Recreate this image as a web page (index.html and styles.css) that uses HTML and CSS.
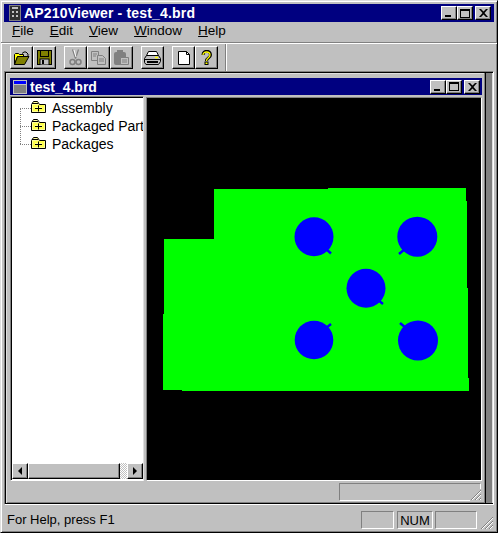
FILE: index.html
```html
<!DOCTYPE html>
<html lang="en">
<head>
<meta charset="utf-8">
<title>AP210Viewer - test_4.brd</title>
<link rel="stylesheet" href="styles.css">
</head>
<body>
<div class="app">
  <div class="titlebar">
    <svg class="appicon" width="12" height="16" viewBox="0 0 12 16"><rect width="12" height="16" fill="#808080"/><rect x="1" y="1" width="10" height="14" fill="#303030"/><rect x="3" y="2" width="6" height="2" fill="#c0c0c0"/><path d="M3 6h2v2H3zM7 6h2v2H7zM3 10h2v2H3zM7 10h2v2H7z" fill="#c0c0c0"/></svg>
    <span class="title">AP210Viewer - test_4.brd</span>
    <div class="caps">
      <span class="cap"><i class="min"></i></span><span class="cap"><i class="max"></i></span><span class="cap close"><svg width="9" height="8" viewBox="0 0 9 8"><path d="M0 0h2l2.500 2.500L7 0h2L5.500 4 9 8H7L4.500 5.500 2 8H0l3.500-4z"/></svg></span>
    </div>
  </div>
  <div class="menu">
    <span><u>F</u>ile</span><span><u>E</u>dit</span><span><u>V</u>iew</span><span><u>W</u>indow</span><span><u>H</u>elp</span>
  </div>
  <div class="toolbar">
    <div class="tools">
      <span class="tool"><svg width="16" height="14" viewBox="0 0 16 14"><path d="M0.500 13.500v-10l1-1h3l1 1h4v2h-6l-3 8z" fill="#ffff00" stroke="#000"/><path d="M0.500 13.500h10l4.500-8H3.500z" fill="#808000" stroke="#000"/><path d="M8 2.500l2-1.500h2l2 2" fill="none" stroke="#000"/><path d="M12.500 3.500h3l-1.500 1.500z" fill="#000"/></svg></span>
      <span class="tool"><svg width="15" height="15" viewBox="0 0 15 15"><rect x="0.500" y="0.500" width="14" height="14" fill="#808000" stroke="#000"/><rect x="3.500" y="0.500" width="8" height="6" fill="#808000" stroke="#000"/><rect x="3" y="9" width="9" height="6" fill="#c0c0c0" stroke="#000"/><rect x="5" y="10" width="2" height="4" fill="#000"/></svg></span>
      <span class="gap"></span>
      <span class="tool"><svg width="13" height="17" viewBox="0 0 13 17"><path d="M3.500 0.500l3 9M9.500 0.500l-3 9" stroke="#808080" fill="none" stroke-width="1.200"/><circle cx="3.500" cy="13" r="2.500" fill="none" stroke="#808080" stroke-width="1.500"/><circle cx="9.500" cy="13" r="2.500" fill="none" stroke="#808080" stroke-width="1.500"/><path d="M5 1l2 7" stroke="#fff"/></svg></span>
      <span class="tool"><svg width="15" height="14" viewBox="0 0 15 14"><path d="M0.500 0.500h7v9h-7z" fill="#c0c0c0" stroke="#808080"/><path d="M6.500 4.500h5l3 3v6h-8z" fill="#c0c0c0" stroke="#808080"/><path d="M2 3h4M2 5h3M8 8h5M8 10h5" stroke="#808080"/></svg></span>
      <span class="tool"><svg width="15" height="15" viewBox="0 0 15 15"><rect x="0" y="2" width="12" height="13" rx="2" fill="#808080"/><rect x="3" y="0" width="6" height="3" fill="#808080"/><path d="M6.500 7.500h8v7h-8z" fill="#c0c0c0" stroke="#808080"/><path d="M8 10h5M8 12h5" stroke="#808080"/></svg></span>
      <span class="gap"></span>
      <span class="tool"><svg width="17" height="14" viewBox="0 0 17 14"><path d="M4.500 0.500h8l2 4h-12z" fill="#fff" stroke="#000"/><path d="M0.500 11.500v-4l2-3h12l2 3v3l-2 3H2z" fill="#c0c0c0" stroke="#000"/><path d="M1 8.500h15" stroke="#000"/><path d="M3 11h11" stroke="#000" stroke-width="2"/><path d="M11 6.500h3" stroke="#ffff00" stroke-width="1.500"/></svg></span>
      <span class="gap"></span>
      <span class="tool"><svg width="12" height="14" viewBox="0 0 12 14"><path d="M0.500 0.500h8l3 3v10h-11z" fill="#fff" stroke="#000"/><path d="M8.500 0.500v3h3" fill="none" stroke="#000"/></svg></span>
      <span class="tool"><svg width="11" height="15" viewBox="0 0 11 15"><path d="M2 5c0-5 7.500-5 7.500 0 0 3-4 2.500-4 6" fill="none" stroke="#000" stroke-width="3"/><path d="M2 5c0-4 7-4 7 0 0 3-3.500 2.500-3.500 6" fill="none" stroke="#ffff00" stroke-width="1.300"/><rect x="3.500" y="11.500" width="4" height="3.500" fill="#000"/><rect x="4.500" y="12.500" width="2" height="1.500" fill="#ffff00"/></svg></span>
    </div>
    <div class="tooledge"></div>
  </div>
  <div class="mdi">
    <div class="child">
      <div class="childtitle">
        <svg class="docicon" width="14" height="14" viewBox="0 0 14 14"><rect width="14" height="14" fill="#c0c0c0"/><rect x="1" y="1" width="12" height="3" fill="#0000ff"/><rect x="1" y="5" width="12" height="8" fill="#808080"/></svg>
        <span class="title">test_4.brd</span>
        <div class="caps">
          <span class="cap"><i class="min"></i></span><span class="cap"><i class="max"></i></span><span class="cap close"><svg width="9" height="8" viewBox="0 0 9 8"><path d="M0 0h2l2.500 2.500L7 0h2L5.500 4 9 8H7L4.500 5.500 2 8H0l3.500-4z"/></svg></span>
        </div>
      </div>
      <div class="split">
        <div class="tree">
          <div class="rows">
            <div class="row"><i class="dots"></i><svg class="folder" width="15" height="12" viewBox="0 0 15 12"><path d="M0.500 11.500v-8l2-3h4l2 3h6v8z" fill="#ffff99" stroke="#000"/><path d="M1 2.500h6" stroke="#000"/><path d="M2 5h11M2 7h2M11 7h2M2 9h11" stroke="#ffff00"/><path d="M4 7.500h7M7.500 4.500v6" stroke="#000"/></svg><span>Assembly</span></div>
            <div class="row"><i class="dots"></i><svg class="folder" width="15" height="12" viewBox="0 0 15 12"><path d="M0.500 11.500v-8l2-3h4l2 3h6v8z" fill="#ffff99" stroke="#000"/><path d="M1 2.500h6" stroke="#000"/><path d="M2 5h11M2 7h2M11 7h2M2 9h11" stroke="#ffff00"/><path d="M4 7.500h7M7.500 4.500v6" stroke="#000"/></svg><span>Packaged Part</span></div>
            <div class="row"><i class="dots"></i><svg class="folder" width="15" height="12" viewBox="0 0 15 12"><path d="M0.500 11.500v-8l2-3h4l2 3h6v8z" fill="#ffff99" stroke="#000"/><path d="M1 2.500h6" stroke="#000"/><path d="M2 5h11M2 7h2M11 7h2M2 9h11" stroke="#ffff00"/><path d="M4 7.500h7M7.500 4.500v6" stroke="#000"/></svg><span>Packages</span></div>
          </div>
          <div class="hscroll">
            <span class="sbtn"><i class="al"></i></span>
            <span class="thumb"></span>
            <span class="track"></span>
            <span class="sbtn"><i class="ar"></i></span>
          </div>
        </div>
        <div class="canvas">
          <svg width="334" height="382" viewBox="147 98 334 382" shape-rendering="crispEdges">
            <path d="M214 189H328V188H466V201H467V288H468V378H469V391H182V390H163V314H164V239H214Z" fill="#00ff00"/>
            <g fill="#0000ff" shape-rendering="auto">
              <circle cx="314" cy="236.700" r="19.500"/>
              <circle cx="417.300" cy="236.700" r="20"/>
              <circle cx="366" cy="288.200" r="19.500"/>
              <circle cx="314" cy="340" r="19.300"/>
              <circle cx="418" cy="340.500" r="20"/>
            </g>
            <g stroke="#0000ff" stroke-width="2.500" fill="none" shape-rendering="auto">
              <path d="M326 249l5 4.500"/>
              <path d="M405 249l-6 5"/>
              <path d="M378 300l5 4"/>
              <path d="M326 328l5-4"/>
              <path d="M406 328l-6-5"/>
            </g>
          </svg>
        </div>
      </div>
      <div class="childstatus">
        <span class="pane"></span>
        <svg class="grip" width="12" height="12" viewBox="0 0 12 12"><path d="M11 1L1 11M11 5L5 11M11 9L9 11" stroke="#808080" fill="none"/><path d="M11 2L2 11M11 6L6 11M11 10L10 11" stroke="#fff" fill="none"/></svg>
      </div>
    </div>
  </div>
  <div class="status">
    <span class="msg">For Help, press F1</span>
    <span class="sp s1"></span><span class="sp s2">NUM</span><span class="sp s3"></span>
    <svg class="grip2" width="14" height="14" viewBox="0 0 14 14"><path d="M13 1L1 13M13 5L5 13M13 9L9 13" stroke="#808080" fill="none"/><path d="M13 2L2 13M13 6L6 13M13 10L10 13" stroke="#fff" fill="none"/></svg>
  </div>
</div>
</body>
</html>
```

FILE: styles.css
```css
* { box-sizing: border-box; }
html, body { margin: 0; padding: 0; background: #fff; }
body { width: 499px; height: 534px; overflow: hidden; }
.app {
  width: 498px; height: 533px;
  background: #c0c0c0;
  border: 1px solid; border-color: #dfdfdf #000 #000 #dfdfdf;
  box-shadow: inset 1px 1px 0 #fff, inset -1px -1px 0 #808080;
  padding: 3px 3px 0 3px;
  display: flex; flex-direction: column;
  font: 13px/16px "Liberation Sans", Arial, sans-serif;
  color: #000;
}
.titlebar, .childtitle {
  background: #000080; color: #fff; display: flex; align-items: center; flex: none;
  font: bold 14px/18px "Liberation Sans", Arial, sans-serif;
}
.titlebar { height: 18px; padding: 0 3px 0 5px; letter-spacing: 0.17px; }
.title { flex: 1; white-space: nowrap; margin-left: 3px; }
.appicon { flex: none; }
.caps { display: flex; flex: none; }
.cap {
  width: 16px; height: 14px; background: #c0c0c0; display: flex; align-items: center; justify-content: center;
  border: 1px solid; border-color: #fff #000 #000 #fff;
  box-shadow: inset -1px -1px 0 #808080;
}
.cap.close { margin-left: 2px; }
.cap svg { fill: #000; }
.min { width: 6px; height: 2px; background: #000; margin-top: 6px; margin-right: 2px; }
.max { width: 10px; height: 9px; border: 1px solid #000; border-top-width: 2px; }
.menu { height: 18px; display: flex; align-items: flex-start; flex: none; margin-top: 1px; font: 13.5px/16px "Liberation Sans", Arial, sans-serif; padding-left: 8px; gap: 16px; }
.toolbar { flex: none; height: 29px; border-top: 1px solid #808080; box-shadow: inset 0 1px 0 #fff; margin: 1px -3px 0 -3px; padding: 3px 0 0 9px; position: relative; }
.tools { display: flex; }
.tool { width: 23px; height: 23px; display: flex; align-items: center; justify-content: center; border: 1px solid; border-color: #fff #000 #000 #fff; box-shadow: inset -1px -1px 0 #808080; background: #c0c0c0; }
.gap { width: 8px; }
.tooledge { position: absolute; left: 224px; top: 1px; bottom: 0; width: 2px; border-left: 1px solid #808080; border-right: 1px solid #fff; }
.mdi { flex: 1; min-height: 0; border: 1px solid; border-color: #808080 #fff #fff #808080; box-shadow: inset 1px 1px 0 #000, inset 0 -1px 0 #000, inset -1px 0 0 #dfdfdf; padding: 1px 7px 1px 1px; background: #808080; display: flex; }
.child { flex: 1; min-width: 0; background: #c0c0c0; padding: 5px 4px 0 4px; box-shadow: inset -1px 0 0 #000, inset -2px 0 0 #808080, inset 1px 1px 0 #dfdfdf, inset 0 -1px 0 #808080; display: flex; flex-direction: column; }
.childtitle { height: 17px; margin-bottom: 1px; padding: 0 2px 0 3px; }
.docicon { flex: none; }
.split { flex: 1; min-height: 0; display: flex; }
.tree { width: 134px; flex: none; background: #fff; border: 1px solid; border-color: #808080 #dfdfdf #fff #808080; box-shadow: inset 1px 1px 0 #000; display: flex; flex-direction: column; }
.rows { flex: 1; min-height: 0; padding: 2px 0 0 9px; font: 14px/18px "Liberation Sans", Arial, sans-serif; overflow: hidden; }
.row { height: 18px; display: flex; align-items: center; white-space: nowrap; position: relative; }
.dots { width: 11px; border-top: 1px dotted #808080; flex: none; }
.row + .row::before { content: ""; position: absolute; left: 0; top: -9px; height: 18px; border-left: 1px dotted #808080; }
.folder { flex: none; margin-right: 6px; margin-top: -2px; }
.hscroll { flex: none; height: 16px; display: flex; margin: 0 0 1px 1px; background: #c0c0c0; }
.sbtn { width: 16px; height: 16px; display: flex; align-items: center; justify-content: center; border: 1px solid; border-color: #fff #000 #000 #fff; box-shadow: inset -1px -1px 0 #808080; background: #c0c0c0; flex: none; }
.al { border: 4px solid transparent; border-left: 0; border-right-color: #000; }
.ar { border: 4px solid transparent; border-right: 0; border-left-color: #000; }
.thumb { flex: 1; border: 1px solid; border-color: #fff #000 #000 #fff; box-shadow: inset -1px -1px 0 #808080; }
.track { width: 7px; flex: none; background: repeating-conic-gradient(#c0c0c0 0 25%, #fff 0 50%) 0 0 / 2px 2px; }
.canvas { flex: 1; min-width: 0; margin: 1px 0 0 2px; background: #000; line-height: 0; border: 1px solid; border-color: #808080 #fff #fff #808080; overflow: hidden; }
.childstatus { flex: none; height: 22px; display: flex; justify-content: flex-end; align-items: flex-start; position: relative; padding: 2px 1px 0 0; }
.pane { width: 142px; height: 18px; border: 1px solid; border-color: #808080 #fff #fff #808080; }
.grip { position: absolute; right: 0; bottom: 2px; background: #c0c0c0; }
.status { flex: none; height: 27px; display: flex; align-items: flex-start; position: relative; padding: 6px 0 0 3px; }
.msg { flex: 1; margin-top: 1px; }
.sp { height: 18px; border: 1px solid; border-color: #808080 #fff #fff #808080; text-align: center; line-height: 17px; display: block; }
.s1 { width: 33px; }
.s2 { width: 36px; margin-left: 3px; }
.s3 { width: 42px; margin-left: 2px; margin-right: 17px; }
.grip2 { position: absolute; right: 0; bottom: 2px; }
```
